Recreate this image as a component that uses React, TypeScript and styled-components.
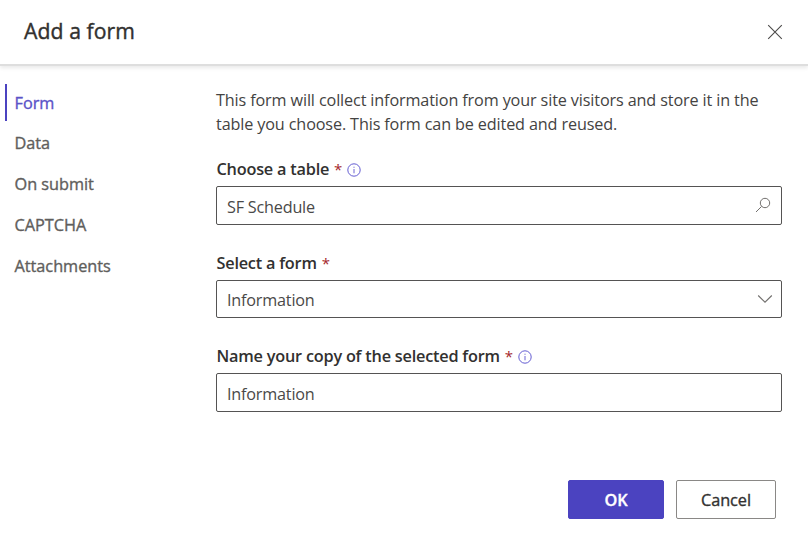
import React from "react";
import styled, { createGlobalStyle } from "styled-components";

const GlobalStyle = createGlobalStyle`
  * { box-sizing: border-box; }
  body { margin: 0; background: #fff; }
  button, input { font: inherit; }
`;

const Dialog = styled.div`
  display: flex;
  flex-direction: column;
  width: 808px;
  height: 540px;
  overflow: hidden;
  background: #fff;
  color: #323130;
  font-family: "Segoe UI", "Open Sans", "Noto Sans", sans-serif;
  font-size: 16.3px;
`;

const Header = styled.header`
  display: flex;
  align-items: center;
  justify-content: space-between;
  flex: none;
  height: 66px;
  padding: 0 25px 2px 24px;
  border-bottom: 2px solid #dedede;
  box-shadow: 0 2px 4px rgba(0, 0, 0, 0.09);
`;

const Title = styled.h1`
  margin: 0;
  font-size: 21.2px;
  line-height: 28px;
  font-weight: 500;
  letter-spacing: 0.08px;
  -webkit-text-stroke: 0.4px currentColor;
`;

const CloseButton = styled.button`
  display: flex;
  padding: 2px 0 0;
  border: 0;
  background: none;
  color: #4c4b4a;
`;

const Body = styled.div`
  display: flex;
  flex: 1;
`;

const Nav = styled.nav`
  display: flex;
  flex-direction: column;
  gap: 4px;
  width: 216px;
  padding: 18px 0 0 5px;
`;

const NavItem = styled.button<{ $active?: boolean }>`
  display: flex;
  align-items: center;
  height: 37px;
  padding: ${(p) => (p.$active ? "1px 0 0 7.5px" : "0 0 1px 7.5px")};
  border: 0;
  border-left: 2px solid ${(p) => (p.$active ? "#4b43c0" : "transparent")};
  background: none;
  color: ${(p) => (p.$active ? "#5b53c8" : "#605e5c")};
  font-weight: 500;
  letter-spacing: -0.02px;
  -webkit-text-stroke: 0.35px currentColor;
`;

const Content = styled.main`
  display: flex;
  flex-direction: column;
  width: 566px;
  padding-top: 22px;
`;

const Description = styled.p`
  margin: 0 0 21px;
  font-size: 16.2px;
  line-height: 24px;
  font-weight: 400;
  letter-spacing: -0.13px;
  color: #444342;
  white-space: nowrap;
`;

const Field = styled.div<{ $gap: number }>`
  display: flex;
  flex-direction: column;
  margin-bottom: ${(p) => p.$gap}px;
`;

const Label = styled.label`
  display: flex;
  align-items: center;
  height: 24px;
  margin-bottom: 5px;
  padding-left: 0.5px;
  font-weight: 600;
  letter-spacing: -0.22px;
`;

const Required = styled.span`
  margin-left: 5px;
  color: #a4262c;
  font-weight: 500;
  font-size: 15px;
`;

const InfoSlot = styled.span`
  display: flex;
  margin: 1px 0 0 5px;
  color: #5b53cf;
`;

const Control = styled.div<{ $height: number }>`
  display: flex;
  align-items: center;
  justify-content: space-between;
  height: ${(p) => p.$height}px;
  padding: 2px 8px 0 10px;
  border: 1px solid #555453;
  border-radius: 2px;
  color: #4a4948;
  font-size: 16.2px;
  font-weight: 400;
  letter-spacing: -0.2px;
`;

const Glyph = styled.span<{ $lift: number; $inset?: number }>`
  display: flex;
  padding: 0 ${(p) => p.$inset ?? 0}px ${(p) => p.$lift}px 0;
  color: #72706e;
`;

const Footer = styled.footer`
  display: flex;
  justify-content: flex-end;
  gap: 12px;
  padding: 0 32px 21px 0;
`;

const Button = styled.button<{ $primary?: boolean }>`
  width: ${(p) => (p.$primary ? 96 : 100)}px;
  height: 39px;
  padding: 1px 0 0;
  border: 1px solid ${(p) => (p.$primary ? "#4b43c0" : "#8a8886")};
  border-radius: 2px;
  background: ${(p) => (p.$primary ? "#4b43c0" : "#fff")};
  color: ${(p) => (p.$primary ? "#fff" : "#323130")};
  font-weight: ${(p) => (p.$primary ? 600 : 500)};
  letter-spacing: -0.05px;
  -webkit-text-stroke: 0.35px currentColor;
`;

const InfoIcon = () => (
  <InfoSlot>
    <svg width="14" height="14" viewBox="0 0 14 14" fill="none" stroke="currentColor">
      <circle cx="7" cy="7" r="6.2" strokeWidth="0.95" />
      <path d="M7 6v4.3M7 3.7v1.1" strokeWidth="0.9" />
    </svg>
  </InfoSlot>
);

const CloseIcon = () => (
  <svg width="16" height="16" viewBox="0 0 16 16" fill="none" stroke="currentColor" strokeWidth="1.1">
    <path d="M1.2 1.2l13.6 13.6M14.8 1.2L1.2 14.8" />
  </svg>
);

const SearchIcon = () => (
  <svg width="16" height="16" viewBox="0 0 16 16" fill="none" stroke="currentColor" strokeWidth="1">
    <circle cx="10" cy="6" r="4.7" />
    <path d="M6.6 9.4L1 15" />
  </svg>
);

const ChevronIcon = () => (
  <svg width="16" height="10" viewBox="0 0 16 10" fill="none" stroke="currentColor" strokeWidth="1.1">
    <path d="M1.2 1.5L8 8.2l6.8-6.7" />
  </svg>
);

const sections = ["Form", "Data", "On submit", "CAPTCHA", "Attachments"];

export default function App() {
  return (
    <>
      <GlobalStyle />
      <Dialog role="dialog" aria-label="Add a form">
        <Header>
          <Title>Add a form</Title>
          <CloseButton aria-label="Close">
            <CloseIcon />
          </CloseButton>
        </Header>
        <Body>
          <Nav>
            {sections.map((name, i) => (
              <NavItem key={name} $active={i === 0}>
                {name}
              </NavItem>
            ))}
          </Nav>
          <Content>
            <Description>
              This form will collect information from your site visitors and store it in the
              <br />
              table you choose. This form can be edited and reused.
            </Description>
            <Field $gap={26}>
              <Label>
                Choose a table<Required>*</Required>
                <InfoIcon />
              </Label>
              <Control $height={39}>
                SF Schedule
                <Glyph $lift={3} $inset={2}>
                  <SearchIcon />
                </Glyph>
              </Control>
            </Field>
            <Field $gap={26}>
              <Label>
                Select a form<Required>*</Required>
              </Label>
              <Control $height={38}>
                Information
                <Glyph $lift={3}>
                  <ChevronIcon />
                </Glyph>
              </Control>
            </Field>
            <Field $gap={0}>
              <Label>
                Name your copy of the selected form<Required>*</Required>
                <InfoIcon />
              </Label>
              <Control $height={39}>Information</Control>
            </Field>
          </Content>
        </Body>
        <Footer>
          <Button $primary>OK</Button>
          <Button>Cancel</Button>
        </Footer>
      </Dialog>
    </>
  );
}
